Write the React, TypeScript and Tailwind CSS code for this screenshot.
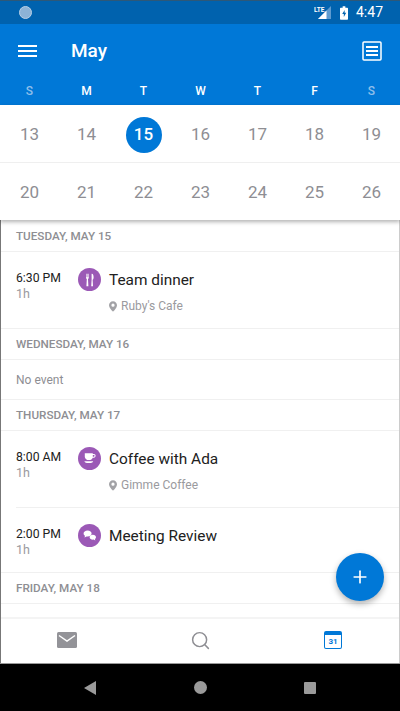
import React from 'react';
import { Plus, Search } from 'lucide-react';

const weekdays = [
  { label: 'S', weekend: true },
  { label: 'M', weekend: false },
  { label: 'T', weekend: false },
  { label: 'W', weekend: false },
  { label: 'T', weekend: false },
  { label: 'F', weekend: false },
  { label: 'S', weekend: true },
];

const weeks = [
  [13, 14, 15, 16, 17, 18, 19],
  [20, 21, 22, 23, 24, 25, 26],
];

const DayHeader = ({ label }: { label: string }) => (
  <div className="h-[31px] shrink-0 flex items-center pt-[2px] px-[15px] border-b border-[#f0f0f0] text-[11.7px] font-medium text-[#8e8e93]">
    {label}
  </div>
);

const Pin = () => (
  <svg width="8" height="11" viewBox="0 0 10 13" className="mr-[4px] shrink-0">
    <path
      fillRule="evenodd"
      fill="#a2a2a6"
      d="M5 0C2.2 0 0 2.2 0 4.9 0 8.4 5 13 5 13s5-4.6 5-8.1C10 2.2 7.800 0 5 0zm0 6.900a2 2 0 1 1 0-4 2 2 0 0 1 0 4z"
    />
  </svg>
);

const Fork = () => (
  <svg width="14" height="16" viewBox="0 0 14 16" fill="#fff">
    <path d="M2 0h.7v4.500h.7V0h.7v4.500h.7V0H5.500v5.300c0 .8-.5 1.300-1 1.500L5 16H2.500L3 6.800c-.5-.2-1-.7-1-1.500z" />
    <path d="M9 0c1.500 0 2.500 2 2.500 4.500 0 1.700-.6 2.800-1.200 3.200L10.800 16H8.500L9 8z" />
  </svg>
);

const Cup = () => (
  <svg width="16" height="15" viewBox="0 0 16 15" fill="#fff">
    <path
      fillRule="evenodd"
      d="M1.500 1h10v1h1.300C14.300 2 15 3 15 4.200s-.8 2.300-2.200 2.300h-1.500C10.800 8.300 9.300 9.500 6.500 9.500S2 8 1.500 5.500zM11.500 3.200v2.100h1.200c.6 0 1-.5 1-1s-.4-1.100-1-1.100z"
    />
    <path d="M1 11h11c-.5 1.200-1.600 2-3 2H4c-1.400 0-2.500-.8-3-2z" />
  </svg>
);

const Chat = () => (
  <svg width="18" height="16" viewBox="0 0 18 16" fill="#fff">
    <path d="M6 1c3 0 5 1.700 5 3.800S9 8.600 6 8.600c-.5 0-.9 0-1.300-.1L2.200 10l.5-2.400C1.600 6.900 1 5.900 1 4.800 1 2.700 3 1 6 1z" />
    <path d="M12.500 6.500c2.400 0 4 1.300 4 3 0 .9-.5 1.700-1.300 2.300l.4 1.900-2-1.200c-2.700.3-5.100-.9-5.100-3 .1-1.700 1.700-3 4-3z" />
  </svg>
);

type EventRowProps = {
  time: string;
  title: string;
  location?: string;
  icon: React.ReactNode;
  className: string;
};

const EventRow = ({ time, title, location, icon, className }: EventRowProps) => (
  <div className={`flex shrink-0 pl-[15px] ${className}`}>
    <div className="w-[62px] shrink-0 pt-[18px]">
      <div className="text-[12.2px] leading-[17px] text-[#212121]">{time}</div>
      <div className="text-[12.5px] leading-[14px] text-[#9a9a9e]">1h</div>
    </div>
    <div className="pt-[16px] shrink-0">
      <div className="w-[23px] h-[23px] rounded-full bg-[#9b59b6] flex items-center justify-center">
        <div className="scale-[0.8] flex">{icon}</div>
      </div>
    </div>
    <div className="pl-[8px] pt-[16px] min-w-0">
      <div className="text-[15.4px] leading-[24px] text-[#212121]">{title}</div>
      {location && (
        <div className="flex items-center mt-[6px] text-[12px] leading-[16px] text-[#9a9a9e]">
          <Pin />
          {location}
        </div>
      )}
    </div>
  </div>
);

export default function App() {
  return (
    <div className="relative w-[400px] h-[711px] flex flex-col overflow-hidden bg-white font-['Roboto',sans-serif]">
      {/* status bar */}
      <div className="h-[24px] shrink-0 bg-[#0062ae] flex items-center justify-between pl-[19px] pr-[17px] border-t border-[#2d5878]">
        <div className="w-[13px] h-[13px] rounded-full bg-[#8db3d6] border border-[#b9d0e6]" />
        <div className="flex items-center">
          <svg width="18" height="14" viewBox="0 0 18 14" className="mr-[8px]">
            <path d="M17 0v13H4z" fill="#5e9bd0" />
            <path d="M12.500 4.500V13H4z" fill="#fff" />
            <text x="0" y="5.500" fontSize="6.500" fontWeight="700" fill="#fff" fontFamily="Roboto, sans-serif">LTE</text>
          </svg>
          <svg width="8" height="14" viewBox="0 0 9 15" className="mr-[8px]">
            <path fill="#fff" fillRule="evenodd" d="M3 0h3v1.500h2.200c.4 0 .8.400.8.800v12c0 .4-.4.700-.8.700H.8c-.4 0-.8-.3-.8-.7v-12c0-.4.400-.8.800-.8H3zM5.200 4 2.500 8.500h1.800V12l2.700-4.800H5.200z" />
          </svg>
          <span className="text-[14px] text-white">4:47</span>
        </div>
      </div>

      {/* app header */}
      <div className="shrink-0 bg-[#0078d7] text-white">
        <div className="h-[54px] flex items-center pl-[18px] pr-[18px]">
          <svg width="19" height="13" viewBox="0 0 19 13" fill="#fff">
            <rect width="19" height="2" y="0" />
            <rect width="19" height="2" y="5" />
            <rect width="19" height="2" y="10" />
          </svg>
          <div className="ml-[34px] text-[19px] font-medium">May</div>
          <svg width="20" height="20" viewBox="0 0 20 20" className="ml-auto" fill="none" stroke="#fff">
            <rect x="1" y="1" width="18" height="18" rx="1" strokeWidth="1.500" />
            <path d="M4 6h12M4 10h12M4 14h12" strokeWidth="2" />
          </svg>
        </div>
        <div className="h-[27px] grid grid-cols-7 pl-px items-center pb-[1px]">
          {weekdays.map((d, i) => (
            <div
              key={i}
              className={`text-center text-[12px] font-medium ${d.weekend ? 'text-[#8ebfea]' : 'text-white'}`}
            >
              {d.label}
            </div>
          ))}
        </div>
      </div>

      {/* calendar strip */}
      <div className="shrink-0 relative z-10 bg-white shadow-[0_2px_4px_rgba(0,0,0,0.3)]">
        {weeks.map((week, w) => (
          <div
            key={w}
            className={`grid grid-cols-7 pl-px pt-[2px] items-center ${w === 0 ? 'h-[58px] border-b border-[#efefef]' : 'h-[57px]'}`}
          >
            {week.map((n) => (
              <div key={n} className="flex justify-center">
                {n === 15 ? (
                  <div className="w-[36px] h-[36px] rounded-full bg-[#0078d7] text-white font-medium text-[17px] flex items-center justify-center">
                    {n}
                  </div>
                ) : (
                  <span className="text-[17px] text-[#8e8e93]">{n}</span>
                )}
              </div>
            ))}
          </div>
        ))}
      </div>

      {/* agenda */}
      <div className="flex-1 min-h-0 flex flex-col pt-px border-l border-r border-l-[#777] border-r-[#ccc]">
        <DayHeader label="TUESDAY, MAY 15" />
        <EventRow
          time="6:30 PM"
          title="Team dinner"
          location="Ruby's Cafe"
          icon={<Fork />}
          className="h-[77px] border-b border-[#f0f0f0]"
        />
        <DayHeader label="WEDNESDAY, MAY 16" />
        <div className="h-[40px] shrink-0 flex items-center px-[15px] border-b border-[#f0f0f0] text-[12px] text-[#8e8e93]">
          No event
        </div>
        <DayHeader label="THURSDAY, MAY 17" />
        <EventRow time="8:00 AM" title="Coffee with Ada" location="Gimme Coffee" icon={<Cup />} className="h-[76px]" />
        <div className="h-px shrink-0 ml-[15px] bg-[#f0f0f0]" />
        <EventRow time="2:00 PM" title="Meeting Review" icon={<Chat />} className="h-[65px] border-b border-[#f0f0f0]" />
        <DayHeader label="FRIDAY, MAY 18" />
        <div className="flex-1" />

        {/* bottom nav */}
        <div className="h-[46px] shrink-0 border-t-2 border-[#f4f4f4] flex items-center pb-[2px]">
          <div className="w-[132px] flex justify-center">
            <svg width="20" height="16" viewBox="0 0 20 16">
              <rect width="20" height="16" rx="1.500" fill="#939398" />
              <path d="M2 3.500 10 9l8-5.500" fill="none" stroke="#fff" strokeWidth="1.500" />
            </svg>
          </div>
          <div className="flex-1 flex justify-center">
            <Search size={21} strokeWidth={1.7} className="text-[#8e8e93]" />
          </div>
          <div className="w-[132px] flex justify-center">
            <div className="w-[18px] h-[18px] rounded-[2px] border-[1.500px] border-t-[4px] border-[#0078d7] flex items-center justify-center text-[8px] font-bold text-[#0078d7] leading-none">
              31
            </div>
          </div>
        </div>
      </div>

      {/* system nav */}
      <div className="h-[48px] shrink-0 bg-black flex items-center border-t border-[#999]">
        <div className="w-[96px] flex justify-end">
          <svg width="12" height="14" viewBox="0 0 12 14"><path d="M12 0v14L0 7z" fill="#9a9a9a" /></svg>
        </div>
        <div className="flex-1 flex justify-center">
          <div className="w-[13px] h-[13px] rounded-full bg-[#9a9a9a]" />
        </div>
        <div className="w-[96px] flex justify-start">
          <div className="w-[12px] h-[12px] rounded-[1px] bg-[#9a9a9a]" />
        </div>
      </div>

      {/* compose button */}
      <div className="absolute left-[336px] top-[553px] w-[48px] h-[48px] rounded-full bg-[#0078d7] shadow-[0_3px_6px_rgba(0,0,0,0.3)] flex items-center justify-center z-20">
        <Plus size={20} strokeWidth={2} className="text-white" />
      </div>
    </div>
  );
}
